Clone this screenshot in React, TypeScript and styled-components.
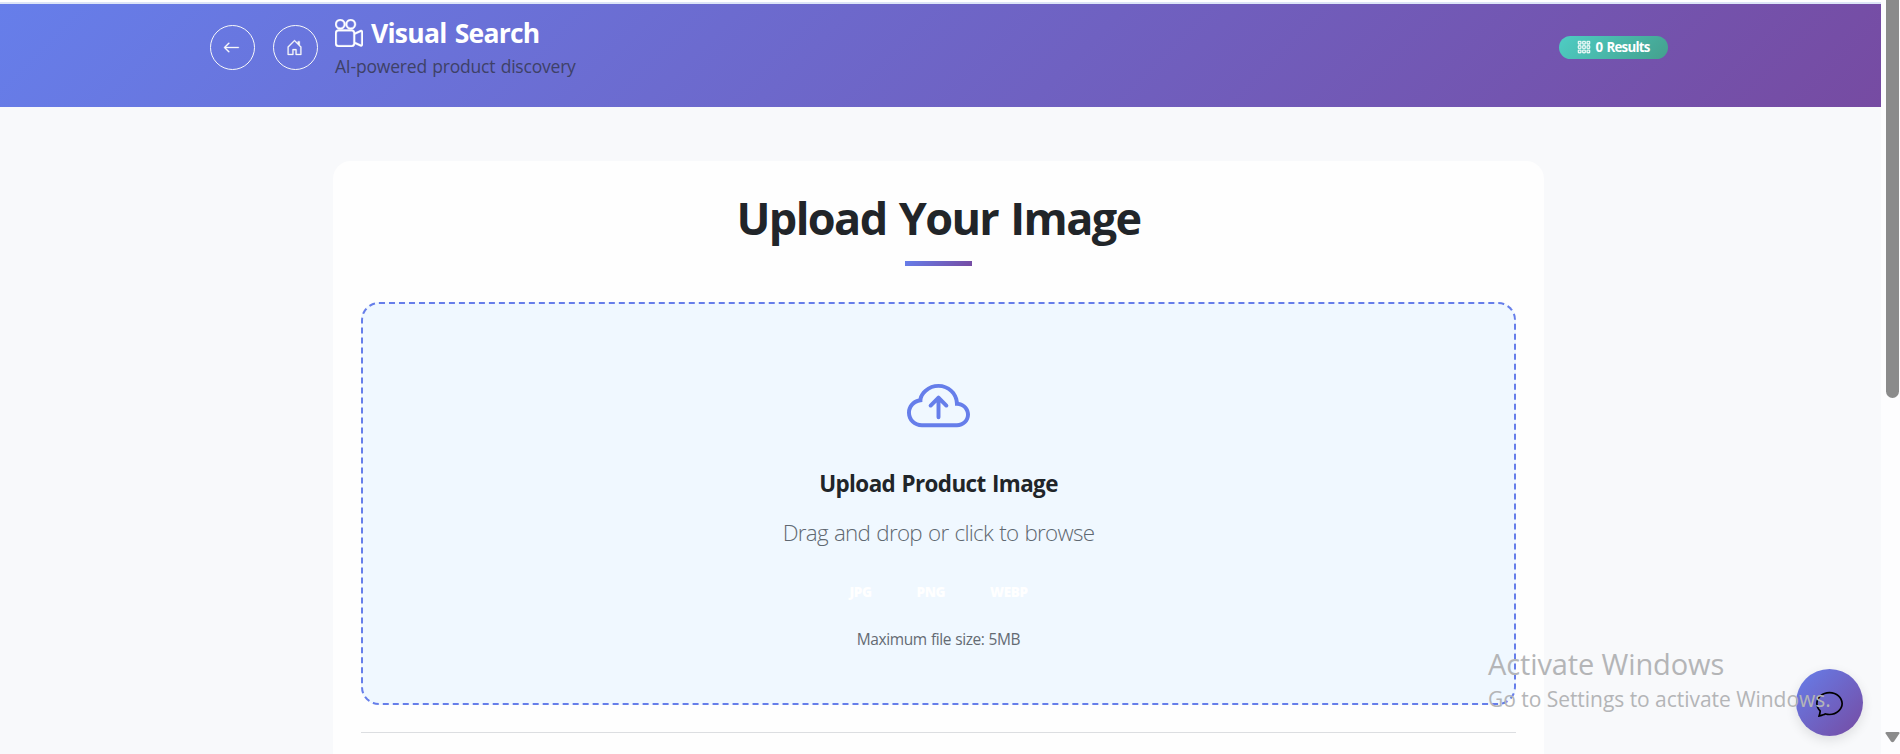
import React from 'react';
import styled, { createGlobalStyle } from 'styled-components';
import { BsArrowLeft, BsHouseDoor, BsCameraReels, BsGrid3X3Gap, BsCloudArrowUp, BsChat } from 'react-icons/bs';

const Global = createGlobalStyle`
  * { box-sizing: border-box; }
  body { margin: 0; overflow: hidden; background: #fdfeff; color: #212529; font-family: "Segoe UI", "Open Sans", "Noto Sans", sans-serif; }
  h1, h2, h3, p { margin: 0; }
`;
const brand = 'linear-gradient(135deg, #667eea 0%, #764ba2 100%)';

const Window = styled.div`display: flex; height: 754px; overflow: hidden; position: relative;`;
const Page = styled.div`width: 1881px; height: 754px; padding-top: 2px; overflow: hidden; background: linear-gradient(#fff 2px, #f8f9fb 2px);`;
const Header = styled.header`
  height: 105px; border-top: 2px solid #dde5f7; background: ${brand} padding-box, #dde5f7;
  padding: 12px 213px 0 210px; display: flex; justify-content: space-between;
`;
const HeaderLeft = styled.div`display: flex;`;
const CircleButton = styled.button`
  width: 45px; height: 45px; margin: 9px 18px 0 0; padding: 0 2px 1px 0; border: 1px solid #f8f9fa; border-radius: 50%;
  background: transparent; color: #f8f9fa; display: grid; place-items: center; font-size: 17px;
  svg { stroke-width: 0.3px; }
`;
const Titles = styled.div`margin-left: -1px;`;
const Title = styled.h1`display: flex; align-items: center; gap: 8px; height: 34px; color: #fff; font-size: 27px;`;
const Fit = styled.span<{ $size: number; $track?: number; $words?: number; $weight?: number; $color?: string; $line?: number }>`
  display: block; white-space: nowrap; font-size: ${p => p.$size}px; letter-spacing: ${p => p.$track ?? 0}px; word-spacing: ${p => p.$words ?? 0}px;
  font-weight: ${p => p.$weight ?? 400}; color: ${p => p.$color ?? 'inherit'}; line-height: ${p => p.$line ?? 24}px;
`;
const ResultsBadge = styled.div`
  width: 109px; height: 23px; margin-top: 20px; padding-bottom: 2px; border-radius: 12px; color: #fff; display: flex; align-items: center;
  justify-content: center; gap: 4px; background: linear-gradient(135deg, #4ecdc4, #44a08d); font-size: 14px;
  svg { stroke-width: 0.3px; }
`;
const Card = styled.main`
  width: 1211px; height: 700px; margin: 54px 0 0 333px; padding: 27px 28px; background: #fefefe; border-radius: 18px;
  display: flex; flex-direction: column; align-items: center;
`;
const Heading = styled.h2`height: 73px; flex: none;`;
const Rule = styled.div`width: 67px; height: 5px; flex: none; background: ${brand};`;
const DropZone = styled.section`
  width: 1155px; height: 403px; flex: none; margin-top: 36px; padding-top: 72px; border: 2px dashed #667eea; border-radius: 18px; background: #f0f8ff;
  display: flex; flex-direction: column; align-items: center;
`;
const CloudIcon = styled(BsCloudArrowUp)`width: 63px; height: 63px; color: #667eea;`;
const Formats = styled.div`display: flex; gap: 45px; margin: 42px 0 0 0;`;
const Divider = styled.div`width: 1155px; height: 1px; flex: none; margin-top: 27px; background: #dcdee1;`;
const Scrollbar = styled.aside`width: 19px; display: flex; flex-direction: column; justify-content: space-between; align-items: flex-end; background: #fdfdfe; padding: 0 0 11px;`;
const Thumb = styled.div`width: 13px; height: 398px; margin-right: 1px; border-radius: 0 0 7px 7px; background: #8b8b8b;`;
const ChatButton = styled.button`
  position: absolute; left: 1796px; top: 669px; width: 67px; height: 67px; padding: 2px 0 0; border: 0; border-radius: 50%;
  display: grid; place-items: center; color: #000; background: ${brand}; box-shadow: 0 4px 12px #0000001c;
`;
const Watermark = styled.div`position: absolute; left: 1488px; top: 645px; pointer-events: none; color: #b4b5b7;`;

export default function App() {
  return (
    <>
      <Global />
      <Window>
        <Page>
          <Header>
            <HeaderLeft>
              <CircleButton aria-label="Back"><BsArrowLeft /></CircleButton>
              <CircleButton aria-label="Home"><BsHouseDoor /></CircleButton>
              <Titles>
                <Title><BsCameraReels size={28} strokeWidth={0.2} /><Fit $size={26.5} $track={-0.75} $words={2} $weight={700} $line={34}>Visual Search</Fit></Title>
                <Fit $size={17.5} $track={-0.2} $words={1} $color="#3e4167" $line={32}>AI-powered product discovery</Fit>
              </Titles>
            </HeaderLeft>
            <ResultsBadge><BsGrid3X3Gap size={14} /><Fit $size={13.3} $track={-0.75} $words={1.5} $weight={700} $line={20}>0 Results</Fit></ResultsBadge>
          </Header>
          <Card>
            <Heading><Fit $size={45} $track={-1.6} $words={2} $weight={700} $line={60}>Upload Your Image</Fit></Heading>
            <Rule />
            <DropZone>
              <CloudIcon />
              <h3><Fit $size={22.4} $track={-0.57} $words={1} $weight={700} $line={90}>Upload Product Image</Fit></h3>
              <Fit $size={22.4} $track={-0.72} $words={1} $weight={300} $color="#5f6871" $line={8}>Drag and drop or click to browse</Fit>
              <Formats>
                {['JPG', 'PNG', 'WEBP'].map(f => <Fit key={f} $size={13.5} $weight={800} $track={-0.4} $color="#fff" $line={26}>{f}</Fit>)}
              </Formats>
              <Fit $size={15.5} $track={-0.4} $words={0.5} $color="#646b73" $line={68}>Maximum file size: 5MB</Fit>
            </DropZone>
            <Divider />
          </Card>
        </Page>
        <Scrollbar>
          <Thumb />
          <svg width="15" height="11" viewBox="0 0 15 11"><path d="M1.5 0h12q1.500 0 .9 1.500L9 9.500q-1.500 1.500-3 0L.6 1.500Q0 0 1.500 0Z" fill="#8b8b8b" /></svg>
        </Scrollbar>
        <ChatButton aria-label="Chat"><BsChat size={27} /></ChatButton>
        <Watermark>
          <Fit $size={29} $track={-0.12} $line={38}>Activate Windows</Fit>
          <Fit $size={21} $track={-0.04} $line={32}>Go to Settings to activate Windows.</Fit>
        </Watermark>
      </Window>
    </>
  );
}
